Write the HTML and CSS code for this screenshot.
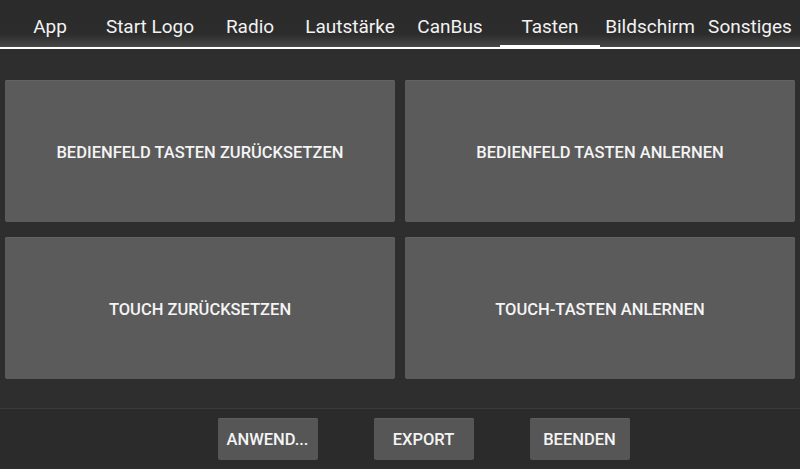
FILE: index.html
```html
<!DOCTYPE html>
<html lang="de">
<head>
<meta charset="utf-8">
<title>Tasten</title>
<link rel="stylesheet" href="styles.css">
</head>
<body>
<div class="screen">
  <nav class="tabs">
    <div class="tab">App</div>
    <div class="tab">Start Logo</div>
    <div class="tab">Radio</div>
    <div class="tab">Lautstärke</div>
    <div class="tab">CanBus</div>
    <div class="tab active">Tasten</div>
    <div class="tab">Bildschirm</div>
    <div class="tab">Sonstiges</div>
  </nav>
  <main class="content">
    <div class="grid">
      <button class="card">BEDIENFELD TASTEN ZURÜCKSETZEN</button>
      <button class="card">BEDIENFELD TASTEN ANLERNEN</button>
      <button class="card">TOUCH ZURÜCKSETZEN</button>
      <button class="card">TOUCH-TASTEN ANLERNEN</button>
    </div>
  </main>
  <footer class="footer">
    <button class="action">ANWEND...</button>
    <button class="action">EXPORT</button>
    <button class="action">BEENDEN</button>
  </footer>
</div>
</body>
</html>
```
FILE: styles.css
```css
html, body {
  margin: 0;
  padding: 0;
  background: #2e2e2e;
}
.screen {
  width: 800px;
  height: 469px;
  display: flex;
  flex-direction: column;
  font-family: Roboto, "Liberation Sans", sans-serif;
  background: #2e2e2e;
  overflow: hidden;
}
.tabs {
  flex: none;
  display: flex;
  height: 47px;
  border-bottom: 2px solid #ffffff;
  background: linear-gradient(to bottom, #2b2b2b 0%, #2c2c2c 72%, #474747 100%);
}
.tab {
  position: relative;
  width: 100px;
  text-align: center;
  color: #f2f2f2;
  font-size: 19px;
  line-height: 22px;
  padding-top: 16px;
  white-space: nowrap;
}
.tab.active::after {
  content: "";
  position: absolute;
  left: 0;
  right: 0;
  bottom: -2px;
  height: 4px;
  background: #ffffff;
}
.content {
  flex: none;
  padding: 31px 5px 0;
  height: 359px;
  box-sizing: border-box;
}
.grid {
  display: grid;
  grid-template-columns: 1fr 1fr;
  grid-template-rows: 142px 142px;
  column-gap: 10px;
  row-gap: 15px;
}
.card {
  border: none;
  border-radius: 2px;
  background: #5b5b5b;
  box-shadow: inset 0 1px 0 #636363;
  color: #f4f4f4;
  font-family: Roboto, "Liberation Sans", sans-serif;
  font-weight: 500;
  font-size: 16.5px;
  padding: 3px 0 0;
  margin: 0;
}
.footer {
  flex: 1;
  border-top: 1px solid #3a3a3a;
  background: #2b2b2b;
  display: flex;
  justify-content: center;
  align-items: flex-start;
  gap: 56px;
  padding: 9px 0 0 47px;
}
.action {
  width: 100px;
  height: 42px;
  border: none;
  border-radius: 2px;
  background: #565656;
  box-shadow: inset 0 1px 0 #5e5e5e;
  color: #f4f4f4;
  font-family: Roboto, "Liberation Sans", sans-serif;
  font-weight: 500;
  font-size: 16.5px;
  padding: 0;
  margin: 0;
}
```
